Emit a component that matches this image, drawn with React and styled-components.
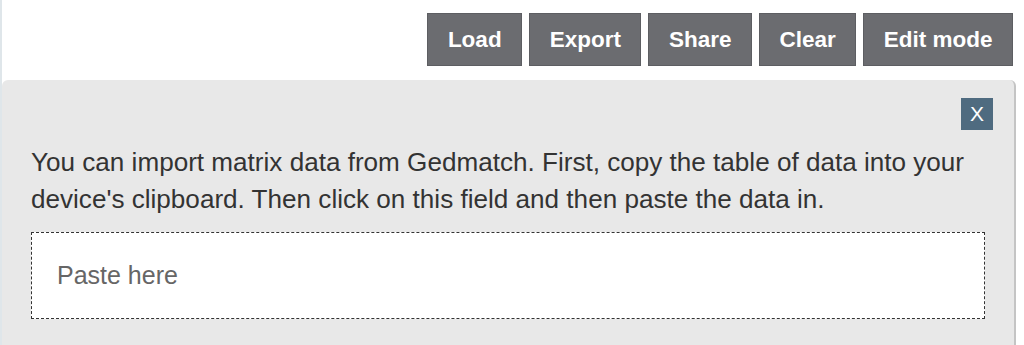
import styled, { createGlobalStyle } from "styled-components";

const GlobalStyle = createGlobalStyle`
  html, body {
    margin: 0;
    padding: 0;
    background: #fff;
    font-family: "Liberation Sans", Arial, sans-serif;
    overflow: hidden;
  }
`;

const Page = styled.div`
  height: 345px;
  overflow: hidden;
  border-left: 2px solid #dfe6ea;
  box-sizing: border-box;
`;

// toolbar
const Toolbar = styled.div`
  display: flex;
  justify-content: flex-end;
  gap: 7px;
  padding: 13px 11px 0 0;
`;

const ToolButton = styled.button`
  height: 53px;
  padding: 0 19.5px;
  background: #6b6c70;
  color: #fff;
  border: 1px solid #5d5e62;
  font-family: "Liberation Sans", Arial, sans-serif;
  font-weight: bold;
  font-size: 22.5px;
  cursor: pointer;
`;

// import panel
const Panel = styled.div`
  margin: 14px 8px 0 0;
  background: #e8e8e8;
  border-radius: 6px 6px 0 0;
  border-right: 2px solid #c4c4c4;
  padding: 18px 21px 40px 29px;
  min-height: 300px;
`;

const PanelHead = styled.div`
  display: flex;
  justify-content: flex-end;
`;

const CloseButton = styled.button`
  width: 32px;
  height: 32px;
  padding: 0;
  background: #4f6b80;
  color: #fff;
  border: none;
  font-family: "Liberation Sans", Arial, sans-serif;
  font-size: 21px;
  cursor: pointer;
`;

const Hint = styled.p`
  margin: 14px 8px 14px 0;
  font-size: 26.1px;
  line-height: 37px;
  color: #333;
`;

const PasteField = styled.div`
  height: 87px;
  margin-right: 8px;
  box-sizing: border-box;
  background: #fff;
  border: 1px dashed #333;
  display: flex;
  align-items: center;
  padding: 0 25px;
  font-size: 25px;
  color: #666;
`;

const buttons = ["Load", "Export", "Share", "Clear", "Edit mode"];

function App() {
  return (
    <>
      <GlobalStyle />
      <Page>
        <Toolbar>
          {buttons.map((label) => (
            <ToolButton key={label}>{label}</ToolButton>
          ))}
        </Toolbar>
        <Panel>
          <PanelHead>
            <CloseButton>X</CloseButton>
          </PanelHead>
          <Hint>
            You can import matrix data from Gedmatch. First, copy the table of
            data into your device's clipboard. Then click on this field and then
            paste the data in.
          </Hint>
          <PasteField>Paste here</PasteField>
        </Panel>
      </Page>
    </>
  );
}

export default App;
